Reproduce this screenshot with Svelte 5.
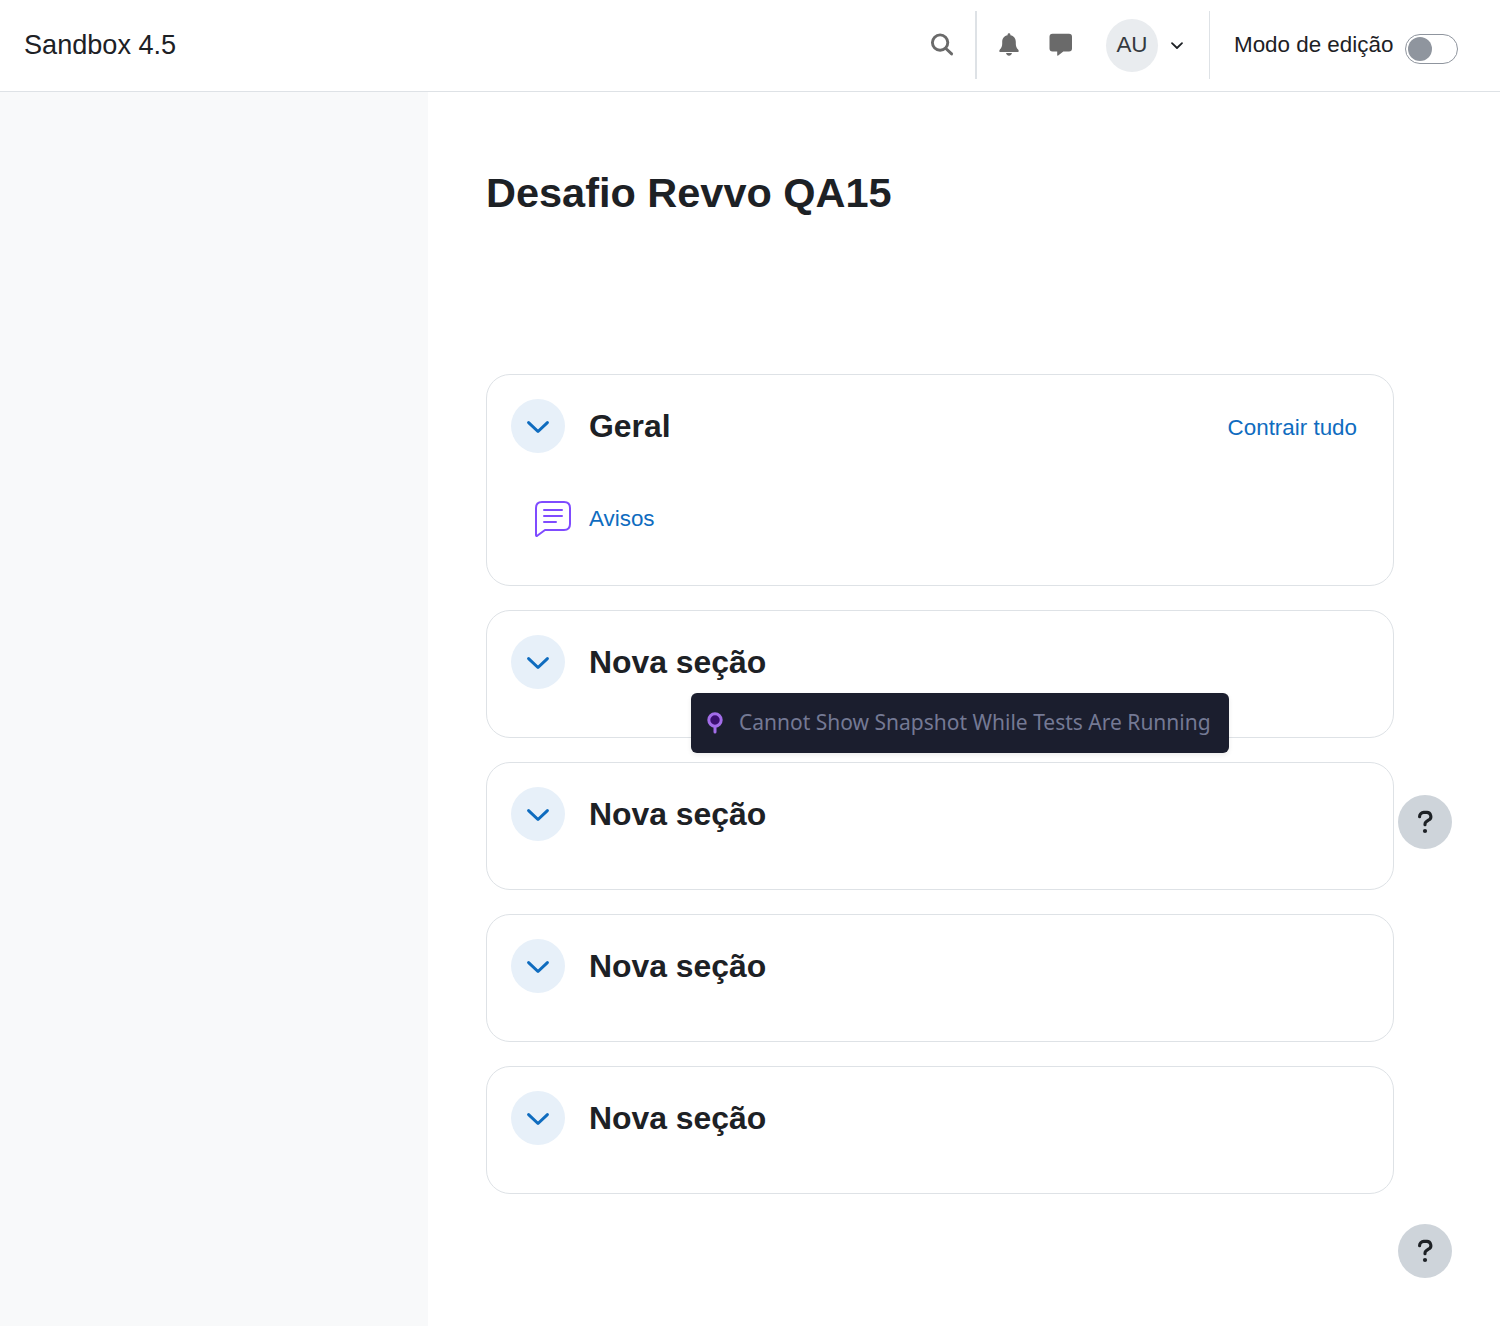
<script>
  const sections = [
    { title: 'Geral', collapseAll: true, activity: 'Avisos' },
    { title: 'Nova seção' },
    { title: 'Nova seção' },
    { title: 'Nova seção' },
    { title: 'Nova seção' }
  ];
</script>

{#snippet help(place)}
  <button class="help {place}" aria-label="Ajuda">
    <svg width="16" height="24" viewBox="0 0 16 24">
      <path d="M2.6 6.8V6.4A4.1 4.1 0 0 1 6.8 2.4H9.2A4.1 4.1 0 0 1 11.4 10.2L9.2 11.7Q8 12.6 8 14.1V14.8" fill="none" stroke="#1d2125" stroke-width="3.1" stroke-linecap="round" />
      <circle cx="8" cy="21" r="2.1" fill="#1d2125" />
    </svg>
  </button>
{/snippet}

<header class="navbar">
  <span class="brand">Sandbox 4.5</span>
  <div class="tools">
    <svg class="search" width="24" height="24" viewBox="0 0 24 24">
      <circle cx="10.1" cy="9.6" r="7.7" fill="none" stroke="#6a6a6a" stroke-width="2.9" />
      <path d="M15.6 15.2L21.6 20.9" stroke="#6a6a6a" stroke-width="2.9" stroke-linecap="round" />
    </svg>
    <span class="divider thick"></span>
    <svg class="bell" width="20" height="24" viewBox="0 0.7 20 24">
      <path d="M10 1C10.8 1 11.4 1.6 11.4 2.4V3C14.8 3.6 16.8 6.3 16.8 9.7V11.2C16.8 13.7 17.4 15.5 19.1 17.3L19.6 18.1C20 19 19.5 19.7 18.5 19.7H1.5C.5 19.7 0 19 .4 18.1L.9 17.3C2.6 15.5 3.2 13.7 3.2 11.2V9.7C3.2 6.3 5.2 3.6 8.6 3V2.4C8.6 1.6 9.2 1 10 1ZM7.1 20.8H12.9C12.9 22.2 11.6 23.4 10 23.4S7.1 22.2 7.1 20.8Z" fill="#6a6a6a" />
    </svg>
    <svg class="chat" width="24" height="24" viewBox="0 0 24 24">
      <path d="M3.5 .7H20Q23 .7 23 3.7V15.4Q23 18.4 20 18.4H14.3L9.2 22.6Q8.2 23.1 8.2 22.1V18.4H3.5Q.5 18.4 .5 15.4V3.7Q.5 .7 3.5 .7Z" fill="#6a6a6a" />
    </svg>
    <span class="avatar">AU</span>
    <svg class="caret" width="14" height="10" viewBox="0 0 14 10">
      <path d="M2 2.2L7 7L12 2.2" fill="none" stroke="#1d2125" stroke-width="1.8" stroke-linecap="round" stroke-linejoin="round" />
    </svg>
    <span class="divider"></span>
    <span class="mode">Modo de edição</span>
    <span class="switch"><span class="knob"></span></span>
  </div>
</header>

<div class="page">
  <aside></aside>
  <main>
    <h1>Desafio Revvo QA15</h1>
    <div class="sections">
      {#each sections as section}
        <section>
          <div class="head">
            <button class="toggle" aria-label="Contrair">
              <svg width="24" height="16" viewBox="0 0 24 16">
                <path d="M2.6 3.6L12 12.5L21.4 3.6" fill="none" stroke="#0f6cbf" stroke-width="3" stroke-linecap="round" stroke-linejoin="round" />
              </svg>
            </button>
            <h2>{section.title}</h2>
            {#if section.collapseAll}<span class="link all">Contrair tudo</span>{/if}
          </div>
          {#if section.activity}
            <div class="activity">
              <svg width="36" height="36" viewBox="0 0 36 36" fill="none" stroke="#7f4bff" stroke-width="2" stroke-linecap="round" stroke-linejoin="round">
                <path d="M7 1H29Q35 1 35 7V23Q35 29 29 29H10L2.2 34.8Q1 35.4 1 34V7Q1 1 7 1Z" />
                <path d="M9 9H27M9 15H27M9 21H21" />
              </svg>
              <span class="link">{section.activity}</span>
            </div>
          {/if}
        </section>
      {/each}
    </div>
  </main>
</div>

<div class="notice">
  <svg width="16" height="22" viewBox="0 0 16 22">
    <circle cx="8" cy="8" r="6.2" fill="#3b0f70" stroke="#a36de9" stroke-width="3" />
    <path d="M8 15V20" stroke="#a36de9" stroke-width="3" stroke-linecap="round" />
  </svg>
  <span class="message">Cannot Show Snapshot While Tests Are Running</span>
</div>

{@render help('upper')}
{@render help('lower')}

<style>
  :global(body) {
    background: #fff;
    color: #1d2125;
    font: 22.4px/34px "Liberation Sans", Arial, sans-serif;
    overflow: hidden;
  }
  :global(*) { box-sizing: border-box; }
  svg { display: block; flex: none; }
  button { border: 0; padding: 0; display: flex; align-items: center; justify-content: center; }
  .navbar {
    height: 92px;
    padding: 0 42px 1px 24px;
    border-bottom: 1px solid #dee2e6;
    display: flex;
    align-items: center;
    justify-content: space-between;
  }
  .brand { font-size: 27.1px; }
  .tools { display: flex; align-items: center; white-space: nowrap; }
  .divider { width: 1px; height: 68px; background: #dee2e6; }
  .thick { width: 2px; }
  .search { margin-right: 21px; }
  .bell { margin-left: 22px; }
  .chat { margin-left: 30px; }
  .avatar {
    width: 52px;
    height: 53px;
    margin-left: 33px;
    border-radius: 50%;
    background: #e9ecef;
    color: #343a40;
    text-align: center;
    line-height: 52px;
  }
  .caret { margin: 1px 25px 0 12px; }
  .mode { margin-left: 24px; width: 159px; }
  .switch {
    width: 53px;
    height: 30px;
    margin: 8px 0 0 12px;
    padding: 2px;
    border: 1px solid #8f959e;
    border-radius: 15px;
  }
  .knob { display: block; width: 24px; height: 24px; border-radius: 50%; background: #8f959e; }
  .page { display: flex; height: 1234px; }
  aside { width: 428px; background: #f8f9fa; }
  main { flex: 1; padding: 76px 106px 0 58px; }
  h1 { margin: 0; font-size: 41.48px; line-height: 50px; }
  .sections { margin-top: 156px; display: flex; flex-direction: column; gap: 24px; }
  section {
    border: 1px solid #dee2e6;
    border-radius: 24px;
    padding: 24px 36px 48px 24px;
  }
  .head { display: flex; align-items: center; gap: 24px; }
  .toggle { width: 54px; height: 54px; border-radius: 50%; background: #e7f0f9; }
  .toggle svg { margin-top: 1px; }
  h2 { margin: 0; font-size: 31.9px; line-height: 38px; }
  .link { color: #0f6cbf; }
  .all { margin-left: auto; padding-top: 3px; }
  .activity { margin: 48px 0 0 24px; display: flex; align-items: center; gap: 18px; }
  .notice {
    position: absolute;
    left: 691px;
    top: 693px;
    width: 538px;
    height: 60px;
    padding-left: 16px;
    display: flex;
    align-items: center;
    gap: 16px;
    border-radius: 6px;
    background: #1b1e2e;
    color: #747994;
    box-shadow: 0 2px 5px rgba(0, 0, 0, .08);
    font: 21px/30px "Noto Sans", sans-serif;
    white-space: nowrap;
  }
  .message { padding-bottom: 2px; }
  .help {
    position: absolute;
    left: 1398px;
    width: 54px;
    height: 54px;
    border-radius: 50%;
    background: #ced4da;
  }
  .upper { top: 795px; }
  .lower { top: 1224px; }
</style>
